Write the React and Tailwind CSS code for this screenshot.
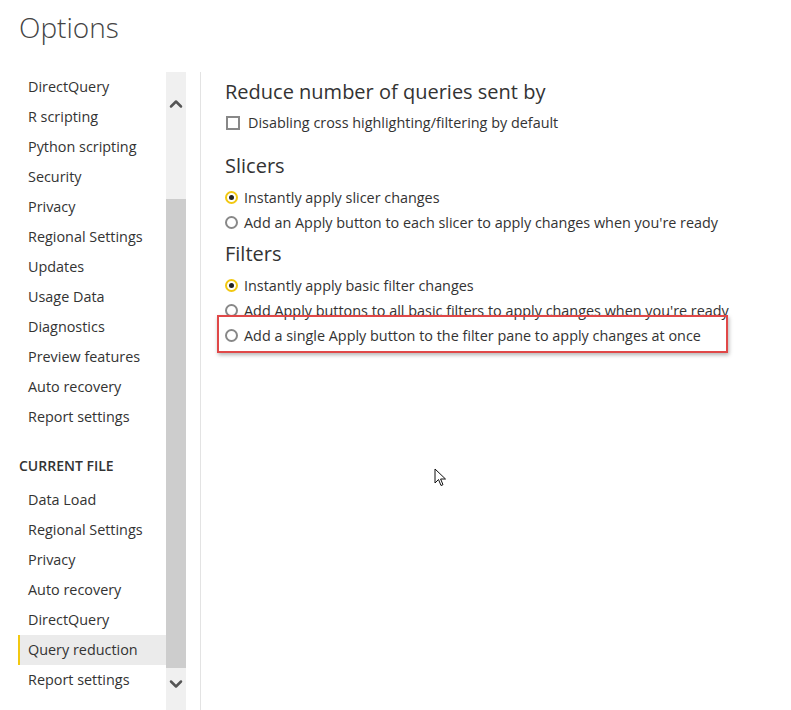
import { ChevronUp, ChevronDown } from 'lucide-react'

const globalItems = [
  'DirectQuery',
  'R scripting',
  'Python scripting',
  'Security',
  'Privacy',
  'Regional Settings',
  'Updates',
  'Usage Data',
  'Diagnostics',
  'Preview features',
  'Auto recovery',
  'Report settings',
]

const fileItems = ['Data Load', 'Regional Settings', 'Privacy', 'Auto recovery', 'DirectQuery', 'Query reduction', 'Report settings']

function NavItem({ label, active }) {
  return (
    <div
      className={
        active
          ? 'h-[30px] flex items-center pl-[8px] border-l-2 border-[#f2c811] bg-[#ebebeb] text-[#333]'
          : 'h-[30px] flex items-center pl-[10px] text-[#333]'
      }
    >
      {label}
    </div>
  )
}

function Radio({ checked, label }) {
  return (
    <div className="flex items-center h-[25px]">
      {checked ? (
        <span className="w-[13px] h-[13px] rounded-full border-2 border-[#f2c811] bg-white flex items-center justify-center mr-[6px]">
          <span className="w-[5px] h-[5px] rounded-full bg-[#222]" />
        </span>
      ) : (
        <span className="w-[13px] h-[13px] rounded-full border-2 border-[#888] bg-white mr-[6px]" />
      )}
      <span>{label}</span>
    </div>
  )
}

export default function App() {
  return (
    <div className="w-[791px] h-[710px] bg-white overflow-hidden text-[#333] font-['Open_Sans','Noto_Sans',sans-serif]">
      <div className="pl-[19px] pt-[7px] h-[72px] text-[28px] font-light text-[#444] leading-[40px]">Options</div>
      <div className="flex">
        <div className="w-[166px] text-[14.4px] pl-[18px]">
          {globalItems.map((l) => (
            <NavItem key={l + 'g'} label={l} />
          ))}
          <div className="h-[18px]" />
          <div className="h-[30px] flex items-center pl-[1px] font-semibold text-[14px] text-[#333]">CURRENT FILE</div>
          <div className="h-[5px]" />
          {fileItems.map((l) => (
            <NavItem key={l + 'f'} label={l} active={l === 'Query reduction'} />
          ))}
        </div>
        <div className="w-[20px] h-[638px] bg-[#f0f0f0] flex flex-col items-center">
          <div className="h-[127px] pt-[22px]">
            <ChevronUp size={20} strokeWidth={3} className="text-[#555]" />
          </div>
          <div className="w-[20px] h-[469px] bg-[#cdcdcd]" />
          <div className="pt-[6px]">
            <ChevronDown size={20} strokeWidth={3} className="text-[#555]" />
          </div>
        </div>
        <div className="w-[14px]" />
        <div className="w-px h-[638px] bg-[#e3e3e3]" />
        <div className="flex-1 pl-[24px] text-[14.4px]">
          <div className="text-[20px] leading-[26px] pt-[7px] text-[#333]">Reduce number of queries sent by</div>
          <div className="flex items-center h-[24px] mt-[6px]">
            <span className="w-[14px] h-[14px] border-2 border-[#888] bg-white mr-[8px] ml-[1px]" />
            <span>Disabling cross highlighting/filtering by default</span>
          </div>
          <div className="text-[20px] leading-[26px] mt-[18px] text-[#333]">Slicers</div>
          <div className="mt-[6px]">
            <Radio checked label="Instantly apply slicer changes" />
            <Radio label="Add an Apply button to each slicer to apply changes when you're ready" />
          </div>
          <div className="text-[20px] leading-[26px] mt-[6px] text-[#333]">Filters</div>
          <div className="mt-[6px]">
            <Radio checked label="Instantly apply basic filter changes" />
            <Radio label="Add Apply buttons to all basic filters to apply changes when you're ready" />
            <div className="relative">
              <Radio label="Add a single Apply button to the filter pane to apply changes at once" />
              <div className="absolute left-[-8px] top-[-8px] w-[511px] h-[38px] border-2 border-[#e04848] shadow-[1px_2px_4px_rgba(0,0,0,0.3)]" />
            </div>
          </div>
          <div className="relative">
            <svg className="absolute left-[209px] top-[120px]" width="13" height="20" viewBox="0 0 13 20">
              <path d="M1 1 L1 15 L4.5 11.5 L7 17.5 L9 16.7 L6.6 11 L11.5 11 Z" fill="white" stroke="#111" strokeWidth="1" strokeLinejoin="round" />
            </svg>
          </div>
        </div>
      </div>
    </div>
  )
}
